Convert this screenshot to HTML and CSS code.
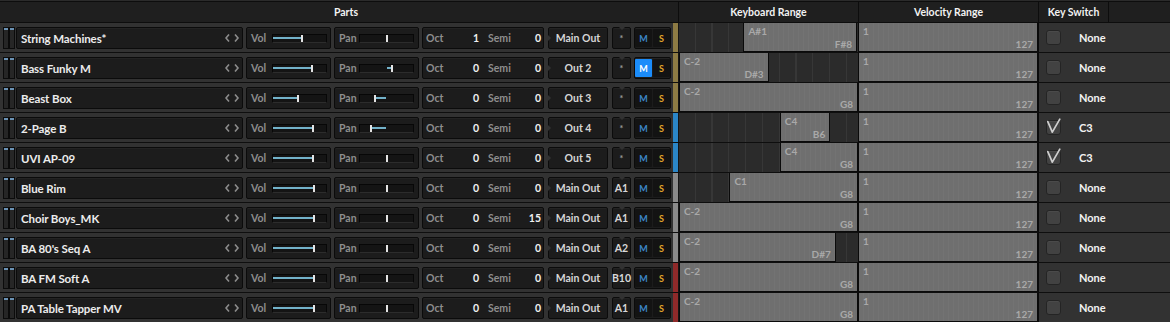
FILE: index.html
```html
<!DOCTYPE html>
<html>
<head>
<meta charset="utf-8">
<link rel="stylesheet" href="styles.css">
</head>
<body>
<div class="hdr">
  <div class="hcell h-parts">Parts</div>
  <div class="hcell h-kb">Keyboard Range</div>
  <div class="hcell h-vel">Velocity Range</div>
  <div class="hcell h-ks">Key Switch</div>
  <div class="hcell h-rest"></div>
</div>

<div class="row">
  <div class="parts">
    <div class="meter"><span class="bar"></span><span class="bar"></span></div>
    <div class="box name"><span class="name-text">String Machines*</span><svg class="arrows" width="15" height="8" viewBox="0 0 15 8"><path d="M4 0.5 L1 4 L4 7.5 M10 0.5 L13 4 L10 7.5"/></svg></div>
    <div class="box slider vol"><span class="lbl">Vol</span><div class="track"><div class="fill" style="left:0;width:54%"></div><div class="thumb" style="left:54%"></div></div></div>
    <div class="box slider pan"><span class="lbl">Pan</span><div class="track"><div class="thumb" style="left:50%"></div></div></div>
    <div class="box tune"><div class="pair"><span class="lbl">Oct</span><span class="val">1</span></div><div class="pair semi"><span class="lbl">Semi</span><span class="val">0</span></div></div>
    <div class="box out">Main Out</div>
    <div class="box star dim">*</div>
    <div class="box ms"><span class="btn m">M</span><span class="btn s">S</span></div>
    <div class="stripe gold"></div>
  </div>
  <div class="kb"><div class="range" style="margin-left:64.4px;width:113.6px"><span class="lo">A#1</span><span class="hi">F#8</span></div></div>
  <div class="vel"><div class="vrange"><span class="lo">1</span><span class="hi">127</span></div></div>
  <div class="ks"><div class="chk"></div><span class="ks-text">None</span></div>
</div>

<div class="row">
  <div class="parts">
    <div class="meter"><span class="bar"></span><span class="bar"></span></div>
    <div class="box name"><span class="name-text">Bass Funky M</span><svg class="arrows" width="15" height="8" viewBox="0 0 15 8"><path d="M4 0.5 L1 4 L4 7.5 M10 0.5 L13 4 L10 7.5"/></svg></div>
    <div class="box slider vol"><span class="lbl">Vol</span><div class="track"><div class="fill" style="left:0;width:74%"></div><div class="thumb" style="left:74%"></div></div></div>
    <div class="box slider pan"><span class="lbl">Pan</span><div class="track"><div class="fill" style="left:50%;width:11%"></div><div class="thumb" style="left:61%"></div></div></div>
    <div class="box tune"><div class="pair"><span class="lbl">Oct</span><span class="val">0</span></div><div class="pair semi"><span class="lbl">Semi</span><span class="val">0</span></div></div>
    <div class="box out">Out 2</div>
    <div class="box star dim">*</div>
    <div class="box ms"><span class="btn m on">M</span><span class="btn s">S</span></div>
    <div class="stripe gold"></div>
  </div>
  <div class="kb"><div class="range" style="margin-left:0;width:89.6px"><span class="lo">C-2</span><span class="hi">D#3</span></div></div>
  <div class="vel"><div class="vrange"><span class="lo">1</span><span class="hi">127</span></div></div>
  <div class="ks"><div class="chk"></div><span class="ks-text">None</span></div>
</div>

<div class="row">
  <div class="parts">
    <div class="meter"><span class="bar"></span><span class="bar"></span></div>
    <div class="box name"><span class="name-text">Beast Box</span><svg class="arrows" width="15" height="8" viewBox="0 0 15 8"><path d="M4 0.5 L1 4 L4 7.5 M10 0.5 L13 4 L10 7.5"/></svg></div>
    <div class="box slider vol"><span class="lbl">Vol</span><div class="track"><div class="fill" style="left:0;width:48%"></div><div class="thumb" style="left:48%"></div></div></div>
    <div class="box slider pan"><span class="lbl">Pan</span><div class="track"><div class="fill" style="left:29%;width:21%"></div><div class="thumb" style="left:29%"></div></div></div>
    <div class="box tune"><div class="pair"><span class="lbl">Oct</span><span class="val">0</span></div><div class="pair semi"><span class="lbl">Semi</span><span class="val">0</span></div></div>
    <div class="box out">Out 3</div>
    <div class="box star dim">*</div>
    <div class="box ms"><span class="btn m">M</span><span class="btn s">S</span></div>
    <div class="stripe gold"></div>
  </div>
  <div class="kb"><div class="range full"><span class="lo">C-2</span><span class="hi">G8</span></div></div>
  <div class="vel"><div class="vrange"><span class="lo">1</span><span class="hi">127</span></div></div>
  <div class="ks"><div class="chk"></div><span class="ks-text">None</span></div>
</div>

<div class="row">
  <div class="parts">
    <div class="meter"><span class="bar"></span><span class="bar"></span></div>
    <div class="box name"><span class="name-text">2-Page B</span><svg class="arrows" width="15" height="8" viewBox="0 0 15 8"><path d="M4 0.5 L1 4 L4 7.5 M10 0.5 L13 4 L10 7.5"/></svg></div>
    <div class="box slider vol"><span class="lbl">Vol</span><div class="track"><div class="fill" style="left:0;width:76%"></div><div class="thumb" style="left:76%"></div></div></div>
    <div class="box slider pan"><span class="lbl">Pan</span><div class="track"><div class="fill" style="left:21%;width:29%"></div><div class="thumb" style="left:21%"></div></div></div>
    <div class="box tune"><div class="pair"><span class="lbl">Oct</span><span class="val">0</span></div><div class="pair semi"><span class="lbl">Semi</span><span class="val">0</span></div></div>
    <div class="box out">Out 4</div>
    <div class="box star dim">*</div>
    <div class="box ms"><span class="btn m">M</span><span class="btn s">S</span></div>
    <div class="stripe blue"></div>
  </div>
  <div class="kb"><div class="range" style="margin-left:100.8px;width:50.4px"><span class="lo">C4</span><span class="hi">B6</span></div></div>
  <div class="vel"><div class="vrange"><span class="lo">1</span><span class="hi">127</span></div></div>
  <div class="ks"><div class="chk"><svg class="check" width="16" height="18" viewBox="0 0 16 18"><path d="M1.8 3.6 L6.3 14.2 L13.8 1.2"/></svg></div><span class="ks-text">C3</span></div>
</div>

<div class="row">
  <div class="parts">
    <div class="meter"><span class="bar"></span><span class="bar"></span></div>
    <div class="box name"><span class="name-text">UVI AP-09</span><svg class="arrows" width="15" height="8" viewBox="0 0 15 8"><path d="M4 0.5 L1 4 L4 7.5 M10 0.5 L13 4 L10 7.5"/></svg></div>
    <div class="box slider vol"><span class="lbl">Vol</span><div class="track"><div class="fill" style="left:0;width:76%"></div><div class="thumb" style="left:76%"></div></div></div>
    <div class="box slider pan"><span class="lbl">Pan</span><div class="track"><div class="thumb" style="left:50%"></div></div></div>
    <div class="box tune"><div class="pair"><span class="lbl">Oct</span><span class="val">0</span></div><div class="pair semi"><span class="lbl">Semi</span><span class="val">0</span></div></div>
    <div class="box out">Out 5</div>
    <div class="box star dim">*</div>
    <div class="box ms"><span class="btn m">M</span><span class="btn s">S</span></div>
    <div class="stripe blue"></div>
  </div>
  <div class="kb"><div class="range" style="margin-left:100.8px;width:78.2px"><span class="lo">C4</span><span class="hi">G8</span></div></div>
  <div class="vel"><div class="vrange"><span class="lo">1</span><span class="hi">127</span></div></div>
  <div class="ks"><div class="chk"><svg class="check" width="16" height="18" viewBox="0 0 16 18"><path d="M1.8 3.6 L6.3 14.2 L13.8 1.2"/></svg></div><span class="ks-text">C3</span></div>
</div>

<div class="row">
  <div class="parts">
    <div class="meter"><span class="bar"></span><span class="bar"></span></div>
    <div class="box name"><span class="name-text">Blue Rim</span><svg class="arrows" width="15" height="8" viewBox="0 0 15 8"><path d="M4 0.5 L1 4 L4 7.5 M10 0.5 L13 4 L10 7.5"/></svg></div>
    <div class="box slider vol"><span class="lbl">Vol</span><div class="track"><div class="fill" style="left:0;width:77%"></div><div class="thumb" style="left:77%"></div></div></div>
    <div class="box slider pan"><span class="lbl">Pan</span><div class="track"><div class="thumb" style="left:50%"></div></div></div>
    <div class="box tune"><div class="pair"><span class="lbl">Oct</span><span class="val">0</span></div><div class="pair semi"><span class="lbl">Semi</span><span class="val">0</span></div></div>
    <div class="box out">Main Out</div>
    <div class="box star">A1</div>
    <div class="box ms"><span class="btn m">M</span><span class="btn s">S</span></div>
    <div class="stripe grey"></div>
  </div>
  <div class="kb"><div class="range" style="margin-left:50.4px;width:128.6px"><span class="lo">C1</span><span class="hi">G8</span></div></div>
  <div class="vel"><div class="vrange"><span class="lo">1</span><span class="hi">127</span></div></div>
  <div class="ks"><div class="chk"></div><span class="ks-text">None</span></div>
</div>

<div class="row">
  <div class="parts">
    <div class="meter"><span class="bar"></span><span class="bar"></span></div>
    <div class="box name"><span class="name-text">Choir Boys_MK</span><svg class="arrows" width="15" height="8" viewBox="0 0 15 8"><path d="M4 0.5 L1 4 L4 7.5 M10 0.5 L13 4 L10 7.5"/></svg></div>
    <div class="box slider vol"><span class="lbl">Vol</span><div class="track"><div class="fill" style="left:0;width:77%"></div><div class="thumb" style="left:77%"></div></div></div>
    <div class="box slider pan"><span class="lbl">Pan</span><div class="track"><div class="thumb" style="left:50%"></div></div></div>
    <div class="box tune"><div class="pair"><span class="lbl">Oct</span><span class="val">0</span></div><div class="pair semi"><span class="lbl">Semi</span><span class="val">15</span></div></div>
    <div class="box out">Main Out</div>
    <div class="box star">A1</div>
    <div class="box ms"><span class="btn m">M</span><span class="btn s">S</span></div>
    <div class="stripe grey"></div>
  </div>
  <div class="kb"><div class="range full"><span class="lo">C-2</span><span class="hi">G8</span></div></div>
  <div class="vel"><div class="vrange"><span class="lo">1</span><span class="hi">127</span></div></div>
  <div class="ks"><div class="chk"></div><span class="ks-text">None</span></div>
</div>

<div class="row">
  <div class="parts">
    <div class="meter"><span class="bar"></span><span class="bar"></span></div>
    <div class="box name"><span class="name-text">BA 80's Seq A</span><svg class="arrows" width="15" height="8" viewBox="0 0 15 8"><path d="M4 0.5 L1 4 L4 7.5 M10 0.5 L13 4 L10 7.5"/></svg></div>
    <div class="box slider vol"><span class="lbl">Vol</span><div class="track"><div class="fill" style="left:0;width:77%"></div><div class="thumb" style="left:77%"></div></div></div>
    <div class="box slider pan"><span class="lbl">Pan</span><div class="track"><div class="thumb" style="left:50%"></div></div></div>
    <div class="box tune"><div class="pair"><span class="lbl">Oct</span><span class="val">0</span></div><div class="pair semi"><span class="lbl">Semi</span><span class="val">0</span></div></div>
    <div class="box out">Main Out</div>
    <div class="box star">A2</div>
    <div class="box ms"><span class="btn m">M</span><span class="btn s">S</span></div>
    <div class="stripe grey"></div>
  </div>
  <div class="kb"><div class="range" style="margin-left:0;width:156.8px"><span class="lo">C-2</span><span class="hi">D#7</span></div></div>
  <div class="vel"><div class="vrange"><span class="lo">1</span><span class="hi">127</span></div></div>
  <div class="ks"><div class="chk"></div><span class="ks-text">None</span></div>
</div>

<div class="row">
  <div class="parts">
    <div class="meter"><span class="bar"></span><span class="bar"></span></div>
    <div class="box name"><span class="name-text">BA FM Soft A</span><svg class="arrows" width="15" height="8" viewBox="0 0 15 8"><path d="M4 0.5 L1 4 L4 7.5 M10 0.5 L13 4 L10 7.5"/></svg></div>
    <div class="box slider vol"><span class="lbl">Vol</span><div class="track"><div class="fill" style="left:0;width:77%"></div><div class="thumb" style="left:77%"></div></div></div>
    <div class="box slider pan"><span class="lbl">Pan</span><div class="track"><div class="thumb" style="left:50%"></div></div></div>
    <div class="box tune"><div class="pair"><span class="lbl">Oct</span><span class="val">0</span></div><div class="pair semi"><span class="lbl">Semi</span><span class="val">0</span></div></div>
    <div class="box out">Main Out</div>
    <div class="box star">B10</div>
    <div class="box ms"><span class="btn m">M</span><span class="btn s">S</span></div>
    <div class="stripe red"></div>
  </div>
  <div class="kb"><div class="range full"><span class="lo">C-2</span><span class="hi">G8</span></div></div>
  <div class="vel"><div class="vrange"><span class="lo">1</span><span class="hi">127</span></div></div>
  <div class="ks"><div class="chk"></div><span class="ks-text">None</span></div>
</div>

<div class="row">
  <div class="parts">
    <div class="meter"><span class="bar"></span><span class="bar"></span></div>
    <div class="box name"><span class="name-text">PA Table Tapper MV</span><svg class="arrows" width="15" height="8" viewBox="0 0 15 8"><path d="M4 0.5 L1 4 L4 7.5 M10 0.5 L13 4 L10 7.5"/></svg></div>
    <div class="box slider vol"><span class="lbl">Vol</span><div class="track"><div class="fill" style="left:0;width:77%"></div><div class="thumb" style="left:77%"></div></div></div>
    <div class="box slider pan"><span class="lbl">Pan</span><div class="track"><div class="thumb" style="left:50%"></div></div></div>
    <div class="box tune"><div class="pair"><span class="lbl">Oct</span><span class="val">0</span></div><div class="pair semi"><span class="lbl">Semi</span><span class="val">0</span></div></div>
    <div class="box out">Main Out</div>
    <div class="box star">A1</div>
    <div class="box ms"><span class="btn m">M</span><span class="btn s">S</span></div>
    <div class="stripe red"></div>
  </div>
  <div class="kb"><div class="range full"><span class="lo">C-2</span><span class="hi">G8</span></div></div>
  <div class="vel"><div class="vrange"><span class="lo">1</span><span class="hi">127</span></div></div>
  <div class="ks"><div class="chk"></div><span class="ks-text">None</span></div>
</div>
</body>
</html>
```
FILE: styles.css
```css
* { box-sizing: border-box; }
html, body { margin: 0; padding: 0; }
body {
  width: 1170px;
  height: 322px;
  overflow: hidden;
  background: #2b2b2b;
  font-family: Lato, "Open Sans", "DejaVu Sans", sans-serif;
  font-weight: 700;
  font-size: 10px;
  color: #e6e6e6;
}

/* header */
.hdr {
  display: flex;
  margin-top: 1px;
  height: 22px;
  border-top: 1px solid #0d0d0d;
  border-bottom: 1px solid #0d0d0d;
  background: #1f1f1f;
}
.hcell {
  display: flex;
  align-items: center;
  justify-content: center;
  color: #f2f2f2;
  font-size: 10.5px;
  border-right: 1px solid #0d0d0d;
  padding-bottom: 1px;
}
.h-parts { width: 679px; padding-left: 14px; }
.h-kb { width: 180px; }
.h-vel { width: 180px; }
.h-ks { width: 70px; }
.h-rest { flex: 1; border-right: none; }

/* rows */
.row {
  display: flex;
  height: 30px;
  border-bottom: 1px solid #0e0e0e;
}
.parts {
  display: flex;
  width: 679px;
  background: #323232;
  border-right: 1px solid #151515;
}
.meter {
  display: flex;
  width: 12px;
  height: 22px;
  margin: 4px 0 3px 3px;
}
.bar {
  width: 6px;
  height: 22px;
  border: 1px solid #0b0b0b;
  background: linear-gradient(#6b92b4 0 2px, #262626 2px);
}
.box {
  display: flex;
  align-items: center;
  height: 22px;
  margin: 4px 0 3px;
  background: #1c1c1c;
  border: 1px solid #0b0b0b;
  border-radius: 2px;
  box-shadow: inset 0 1px 0 #232323;
}
.name {
  width: 227px;
  margin-left: 1px;
  padding: 0 2px 0 4px;
  justify-content: space-between;
}
.name-text {
  font-size: 11.5px;
  color: #ececec;
  letter-spacing: -0.1px;
}
.arrows path {
  fill: none;
  stroke: #8c8c8c;
  stroke-width: 1.6;
}
.lbl { color: #8e8e8e; font-size: 10.5px; }
.val { color: #f0f0f0; font-size: 10.5px; }

.slider {
  width: 85px;
  margin-left: 3px;
  padding: 0 3px 0 4px;
}
.pan { padding-right: 4px; }
.track {
  position: relative;
  width: 55px;
  height: 9px;
  margin-left: auto;
  background: #141414;
  border: 1px solid #070707;
  border-bottom-color: #2c2c2c;
}
.fill {
  position: absolute;
  top: 2px;
  height: 2px;
  background: #72b2ca;
}
.thumb {
  position: absolute;
  top: 0;
  bottom: 0;
  width: 2px;
  margin-left: -1px;
  background: #e4e4e4;
}

.tune {
  width: 122px;
  margin-left: 3px;
  padding-left: 3px;
}
.pair {
  display: flex;
  justify-content: space-between;
  width: 53px;
}
.semi { margin-left: 9px; }

.out {
  position: relative;
  width: 60px;
  margin-left: 4px;
  justify-content: center;
  color: #d6d6d6;
  font-size: 10.5px;
}
.out::before {
  content: "";
  position: absolute;
  left: -1px;
  top: 50%;
  margin-top: -3px;
  border-left: 3px solid #323232;
  border-top: 3px solid transparent;
  border-bottom: 3px solid transparent;
}
.star {
  position: relative;
  width: 19px;
  margin-left: 4px;
  justify-content: center;
  color: #d8d8d8;
  font-size: 10.5px;
}
.star.dim { color: #9a9a9a; font-size: 9px; padding-top: 1px; }
.star::before {
  content: "";
  position: absolute;
  top: -1px;
  left: 50%;
  margin-left: -3px;
  border-top: 3px solid #323232;
  border-left: 3px solid transparent;
  border-right: 3px solid transparent;
}
.ms {
  width: 37px;
  margin-left: 3px;
  padding: 1px 0;
  gap: 1px;
  align-items: stretch;
}
.btn {
  flex: 1;
  display: flex;
  align-items: center;
  justify-content: center;
  background: #131313;
  border-radius: 1px;
  font-size: 9px;
}
.btn.m { color: #3c86c8; }
.btn.s { color: #e2a52a; }
.btn.m.on { background: #1b8cfa; color: #ffffff; }
.stripe {
  width: 5px;
  margin-left: 2px;
}
.gold { background: #8d7b44; }
.blue { background: #2b86c7; }
.grey { background: #8a8a8a; }
.red { background: #8f2a2a; }

/* keyboard range */
.kb {
  display: flex;
  width: 180px;
  border-right: 1px solid #0a0a0a;
  background: repeating-linear-gradient(90deg, #2b2b2b 0 15.6px, #373737 15.6px 16.8px);
}
.range, .vrange {
  display: flex;
  flex-direction: column;
  justify-content: space-between;
  height: 29px;
  padding: 3px 4px 1px 4px;
  border: 1px solid #0a0a0a;
  border-top: none;
  background: repeating-linear-gradient(90deg, #6f6f6f 0 4px, #737373 4px 5px);
  font-size: 10px;
  line-height: 11px;
  color: #a9a9a9;
}
.range.full { width: 179px; }
.lo { align-self: flex-start; }
.hi { align-self: flex-end; }

.vel {
  display: flex;
  width: 180px;
  border-right: 1px solid #0a0a0a;
  background: #2b2b2b;
}
.vrange {
  width: 179px;
  border-left: none;
}

/* key switch */
.ks {
  display: flex;
  align-items: center;
  width: 131px;
  background: #323232;
}
.chk {
  flex: none;
  width: 15px;
  height: 15px;
  margin-left: 7px;
  border-radius: 3px;
  background: #424242;
  border: 1px solid #242424;
  box-shadow: inset 0 1px 0 #4a4a4a;
}
.check {
  display: block;
  margin: -3px 0 0 -1px;
  overflow: visible;
}
.check path {
  fill: none;
  stroke: #cfcfcf;
  stroke-width: 1.7;
  stroke-linecap: round;
  stroke-linejoin: round;
}
.ks-text {
  margin-left: 18px;
  font-size: 11px;
  color: #f2f2f2;
}
```
